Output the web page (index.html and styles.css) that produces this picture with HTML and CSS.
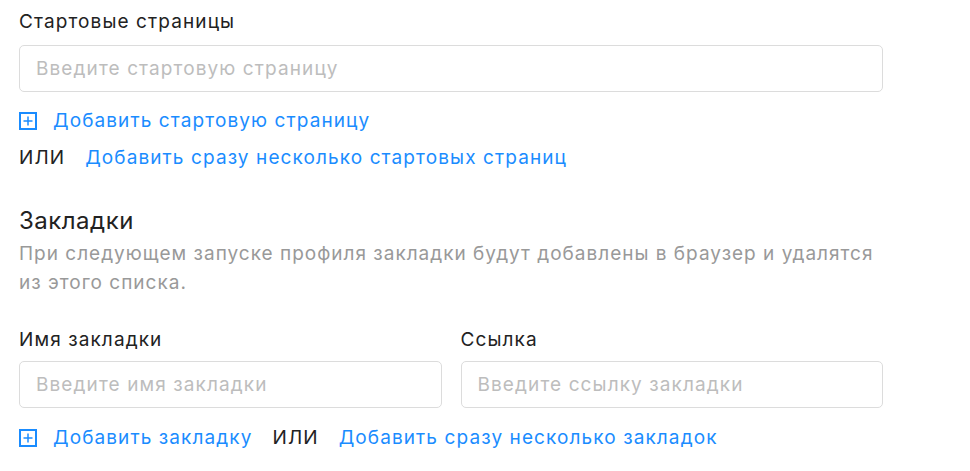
FILE: index.html
```html
<!DOCTYPE html>
<html lang="ru">
<head>
    <meta charset="UTF-8">
    <title>Стартовые страницы и закладки</title>
    <link rel="stylesheet" href="styles.css">
</head>
<body>

<div class="container">
    <div class="field">
        <label class="label">Стартовые страницы</label>
        <input class="input" type="text" placeholder="Введите стартовую страницу">
    </div>

    <a class="add-link add-first" href="#">
        <svg class="plus" width="18" height="18" viewBox="0 0 18 18">
            <rect x="1" y="1" width="16" height="16" fill="none" stroke="currentColor" stroke-width="2"/>
            <path d="M9 4.5v9M4.5 9h9" stroke="currentColor" stroke-width="1.5"/>
        </svg>
        Добавить стартовую страницу
    </a>
    <div class="or-row">
        <span class="or">ИЛИ</span>
        <a class="link" href="#">Добавить сразу несколько стартовых страниц</a>
    </div>

    <h3 class="title">Закладки</h3>
    <p class="hint">При следующем запуске профиля закладки будут добавлены в браузер и удалятся из этого списка.</p>

    <div class="bookmark-grid">
        <div class="field">
            <label class="label">Имя закладки</label>
            <input class="input" type="text" placeholder="Введите имя закладки">
        </div>
        <div class="field">
            <label class="label">Ссылка</label>
            <input class="input" type="text" placeholder="Введите ссылку закладки">
        </div>
    </div>

    <div class="or-row bottom-row">
        <a class="add-link" href="#">
            <svg class="plus" width="18" height="18" viewBox="0 0 18 18">
                <rect x="1" y="1" width="16" height="16" fill="none" stroke="currentColor" stroke-width="2"/>
                <path d="M9 4.5v9M4.5 9h9" stroke="currentColor" stroke-width="1.5"/>
            </svg>
            Добавить закладку
        </a>
        <span class="or">ИЛИ</span>
        <a class="link" href="#">Добавить сразу несколько закладок</a>
    </div>
</div>

</body>
</html>
```

FILE: styles.css
```css
body {
    font-family: Inter, "Noto Sans", sans-serif;
    font-size: 19px;
    letter-spacing: 1.1px;
    background: #fff;
    color: #222;
    margin: 0;
    padding: 9px 19px;
}
.container {
    width: 864px;
}
.field {
    display: flex;
    flex-direction: column;
}
.label {
    font-size: 19px;
    line-height: 26px;
    color: #222;
    margin-bottom: 10px;
}
.bookmark-grid .label {
    margin-bottom: 8px;
}
.input {
    height: 47px;
    box-sizing: border-box;
    border: 1px solid #dcdcdc;
    border-radius: 5px;
    padding: 0 16px;
    font-family: inherit;
    font-size: 19px;
    letter-spacing: 1.1px;
    color: #222;
    outline: none;
}
.input::placeholder {
    color: #bdbdbd;
}
a {
    color: #1a8cff;
    text-decoration: none;
    font-size: 19px;
}
.add-link {
    display: inline-flex;
    align-items: center;
    gap: 16px;
}
.add-first {
    margin-top: 16px;
    line-height: 26px;
}
.plus {
    flex-shrink: 0;
}
.or-row {
    display: flex;
    align-items: center;
    gap: 20px;
    font-size: 19px;
    line-height: 26px;
    margin-top: 10px;
}
.or {
    color: #222;
}
.title {
    font-size: 24px;
    font-weight: 400;
    letter-spacing: 0.5px;
    line-height: 28px;
    margin: 36px 0 4px;
}
.hint {
    font-size: 19px;
    letter-spacing: 1px;
    line-height: 29px;
    color: #999;
    margin: 0 0 30px;
}
.bookmark-grid {
    display: grid;
    grid-template-columns: 1fr 1fr;
    gap: 19px;
}
.bottom-row {
    margin-top: 17px;
}
```
